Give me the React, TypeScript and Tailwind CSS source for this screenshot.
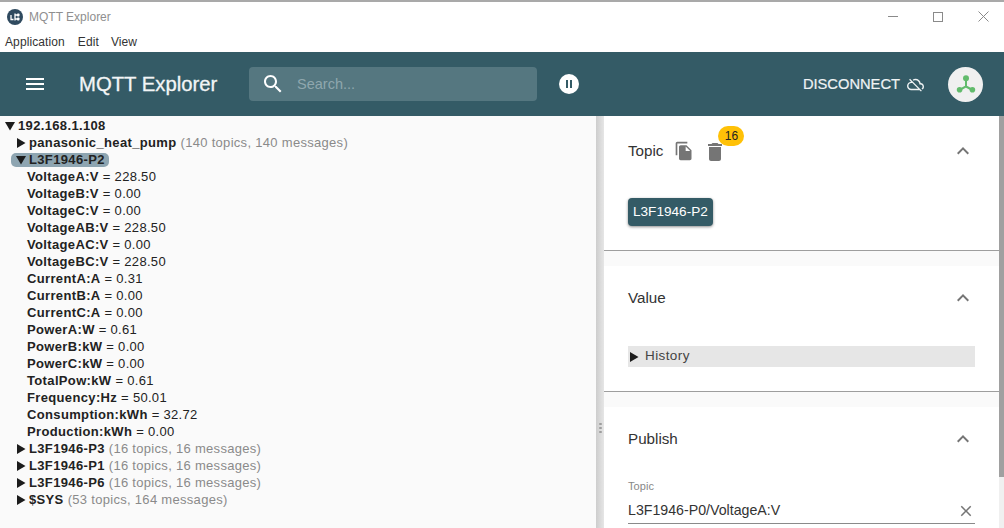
import React from "react";

const sans = "font-['Liberation_Sans',sans-serif]";

function Collapsed({ name, info }: { name: string; info: string }) {
  return (
    <div className="flex h-[17px] items-center pl-[16px]">
      <svg width="10" height="10" viewBox="0 0 10 10" className="mr-[3px] shrink-0"><path d="M1 0 L9.5 5 L1 10 Z" fill="#1c1c1c" /></svg>
      <span className="font-bold text-[#222]">{name}</span>
      <span className="ml-[4px] tracking-[0.3px] text-[#8a8a8a]">{info}</span>
    </div>
  );
}

function Leaf({ k, v }: { k: string; v: string }) {
  return (
    <div className="flex h-[17px] items-center whitespace-pre pl-[27px] text-[#222]">
      <span className="font-bold">{k}</span>
      <span className="tracking-[0.3px]"> = {v}</span>
    </div>
  );
}

const leaves: [string, string][] = [
  ["VoltageA:V", "228.50"],
  ["VoltageB:V", "0.00"],
  ["VoltageC:V", "0.00"],
  ["VoltageAB:V", "228.50"],
  ["VoltageAC:V", "0.00"],
  ["VoltageBC:V", "228.50"],
  ["CurrentA:A", "0.31"],
  ["CurrentB:A", "0.00"],
  ["CurrentC:A", "0.00"],
  ["PowerA:W", "0.61"],
  ["PowerB:kW", "0.00"],
  ["PowerC:kW", "0.00"],
  ["TotalPow:kW", "0.61"],
  ["Frequency:Hz", "50.01"],
  ["Consumption:kWh", "32.72"],
  ["Production:kWh", "0.00"],
];

function Chevron() {
  return (
    <svg width="24" height="24" viewBox="0 0 24 24" fill="#757575" className="shrink-0">
      <path d="M12 8l-6 6 1.41 1.41L12 10.83l4.59 4.58L18 14z" />
    </svg>
  );
}

function Divider() {
  return <div className="h-[16px] border-t border-[#9e9e9e] bg-[#fafafa]" />;
}

export default function App() {
  return (
    <div className={`flex h-[528px] w-[1004px] flex-col overflow-hidden bg-white ${sans}`}>
      <div className="flex h-[31px] shrink-0 items-center border-t-2 border-[#a9a9a9] bg-white pl-[7px]">
        <svg width="16" height="16" viewBox="0 0 16 16" className="shrink-0">
          <circle cx="8" cy="8" r="8" fill="#2f4a5f" />
          <path d="M4 6v4.5h2.5M8 4.5v7M8 6h2.5M8 10h2.5" stroke="#fff" strokeWidth="1.3" fill="none" />
          <rect x="10" y="4.5" width="2.5" height="3" rx="0.8" fill="#fff" />
          <rect x="10" y="8.5" width="2.5" height="3" rx="0.8" fill="#fff" />
        </svg>
        <span className="ml-[6px] text-[12px] text-[#8f8f8f]">MQTT Explorer</span>
        <div className="ml-auto flex items-center">
          <div className="mr-[35px] h-px w-[10px] bg-[#8a8a8a]" />
          <div className="mr-[35px] h-[10px] w-[10px] border border-[#8a8a8a]" />
          <svg width="11" height="11" viewBox="0 0 11 11" className="mr-[15px]"><path d="M0.5 0.5l10 10M10.5 0.5l-10 10" stroke="#8a8a8a" strokeWidth="1" /></svg>
        </div>
      </div>
      <div className="flex h-[21px] shrink-0 items-center bg-white pl-[5px] pt-[1px] text-[12px] tracking-[0.1px] text-[#333]">
        <span>Application</span>
        <span className="ml-[13px]">Edit</span>
        <span className="ml-[12px]">View</span>
      </div>
      <header className="flex h-[64px] shrink-0 items-center bg-[#345b66] text-white">
        <svg width="24" height="24" viewBox="0 0 24 24" fill="#fff" className="ml-[23px] shrink-0"><path d="M3 18h18v-2H3v2zm0-5h18v-2H3v2zm0-7v2h18V6H3z" /></svg>
        <span className="ml-[32px] w-[138px] whitespace-nowrap text-[20.3px] text-[#f2f5f6] [-webkit-text-stroke:0.3px_#f2f5f6]">MQTT Explorer</span>
        <div className="ml-[32px] flex h-[34px] w-[288px] items-center rounded bg-[#557780]">
          <svg width="24" height="24" viewBox="0 0 24 24" fill="#fff" className="ml-[12px] shrink-0"><path d="M15.5 14h-.79l-.28-.27C15.41 12.59 16 11.11 16 9.5 16 5.91 13.09 3 9.5 3S3 5.91 3 9.5 5.91 16 9.5 16c1.61 0 3.09-.59 4.23-1.57l.27.28v.79l5 4.99L20.49 19l-4.99-5zm-6 0C7.01 14 5 11.99 5 9.5S7.01 5 9.5 5 14 7.01 14 9.5 11.99 14 9.5 14z" /></svg>
          <span className="ml-[12px] pt-[1px] text-[14.5px] text-[#8fa7ae]">Search...</span>
        </div>
        <div className="ml-[22px] flex h-[20px] w-[20px] items-center justify-center gap-[2px] rounded-full bg-white">
          <div className="h-[8px] w-[2px] bg-[#345b66]" />
          <div className="h-[8px] w-[2px] bg-[#345b66]" />
        </div>
        <span className="ml-auto text-[14.7px] text-[#eef3f4] [-webkit-text-stroke:0.2px_#eef3f4]">DISCONNECT</span>
        <svg width="17" height="17" viewBox="0 0 24 24" fill="#eef3f4" className="ml-[7px] shrink-0"><path d="M19.35 10.04C18.67 6.59 15.64 4 12 4c-1.48 0-2.85.43-4.01 1.17l1.46 1.46C10.21 6.23 11.08 6 12 6c3.04 0 5.5 2.46 5.5 5.5v.5H19c1.66 0 3 1.34 3 3 0 1.13-.64 2.11-1.56 2.62l1.45 1.45C23.16 18.16 24 16.68 24 15c0-2.64-2.05-4.78-4.65-4.96zM3 5.27l2.75 2.74C2.56 8.15 0 10.77 0 14c0 3.31 2.69 6 6 6h11.73l2 2L21 20.73 4.27 4 3 5.27zM7.73 10l8 8H6c-2.21 0-4-1.79-4-4s1.79-4 4-4h1.73z" /></svg>
        <div className="ml-[24px] mr-[21px] flex h-[35px] w-[35px] items-center justify-center rounded-full bg-[#f0f0f0]">
          <svg width="20" height="20" viewBox="0 0 20 20">
            <path d="M10 4v8.5L3.5 16M10 12.5l6.5 3.5" stroke="#62bb6c" strokeWidth="2" fill="none" />
            <circle cx="10" cy="4.2" r="3" fill="#62bb6c" />
            <circle cx="3.6" cy="15.8" r="2.8" fill="#62bb6c" />
            <circle cx="16.4" cy="15.8" r="2.8" fill="#62bb6c" />
          </svg>
        </div>
      </header>
      <div className="flex min-h-0 flex-1">
        <div className="w-[596px] shrink-0 bg-[#fafafa] pl-[5px] pt-[1px] text-[13px] tracking-[0.35px]">
          <div className="flex h-[17px] items-center">
            <svg width="10" height="10" viewBox="0 0 10 10" className="mr-[3px] shrink-0"><path d="M0 1 L10 1 L5 9.5 Z" fill="#1c1c1c" /></svg>
            <span className="font-bold text-[#222]">192.168.1.108</span>
          </div>
          <div className="-ml-[5px]">
            <Collapsed name="panasonic_heat_pump" info="(140 topics, 140 messages)" />
          </div>
          <div className="ml-[6px] flex h-[14px] mt-[1.5px] mb-[1.5px] w-[98px] items-center rounded-[5px] bg-[#8ea5b1] pl-[5px]">
            <svg width="10" height="10" viewBox="0 0 10 10" className="mr-[3px] shrink-0"><path d="M0 1 L10 1 L5 9.5 Z" fill="#1c1c1c" /></svg>
            <span className="font-bold text-[#222]">L3F1946-P2</span>
          </div>
          <div className="-ml-[5px]">
            {leaves.map(([k, v]) => (
              <Leaf key={k} k={k} v={v} />
            ))}
            <Collapsed name="L3F1946-P3" info="(16 topics, 16 messages)" />
            <Collapsed name="L3F1946-P1" info="(16 topics, 16 messages)" />
            <Collapsed name="L3F1946-P6" info="(16 topics, 16 messages)" />
            <Collapsed name="$SYS" info="(53 topics, 164 messages)" />
          </div>
        </div>
        <div className="flex w-[8px] shrink-0 items-center justify-center bg-gradient-to-r from-[#cdcdcd] to-[#e6e6e6]">
          <div className="mt-[212px] flex flex-col gap-[1.5px]">
            <div className="h-[2.5px] w-[3px] rounded-full bg-[#9e9e9e]" />
            <div className="h-[2.5px] w-[3px] rounded-full bg-[#9e9e9e]" />
            <div className="h-[2.5px] w-[3px] rounded-full bg-[#9e9e9e]" />
          </div>
        </div>
        <div className="flex w-[395px] shrink-0 flex-col bg-white">
          <section className="h-[134px] shrink-0 px-[24px] pt-[21px]">
            <div className="flex h-[28px] items-center">
              <span className="text-[15.2px] text-[#333]">Topic</span>
              <svg width="20" height="20" viewBox="0 0 24 24" fill="#757575" className="ml-[11px]"><path d="M16 1H4c-1.1 0-2 .9-2 2v14h2V3h12V1zm-1 4l6 6v10c0 1.1-.9 2-2 2H7.99C6.89 23 6 22.1 6 21l.01-14c0-1.1.89-2 1.99-2h7zm-1 7h5.5L14 6.5V12z" /></svg>
              <div className="relative ml-[9px] mt-[2px] h-[24px]">
                <svg width="24" height="24" viewBox="0 0 24 24" fill="#757575"><path d="M6 19c0 1.1.9 2 2 2h8c1.1 0 2-.9 2-2V7H6v12zM19 4h-3.5l-1-1h-5l-1 1H5v2h14V4z" /></svg>
                <span className="absolute left-[15px] top-[-14px] flex h-[20px] w-[26px] items-center justify-center rounded-full bg-[#ffc107] text-[12px] text-[#222]">16</span>
              </div>
              <div className="ml-auto"><Chevron /></div>
            </div>
            <div className="mt-[33px] inline-flex h-[28px] items-center rounded-[4px] bg-[#345b66] px-[5px] text-[13.6px] text-white shadow-[0_1px_3px_rgba(0,0,0,0.45)]">L3F1946-P2</div>
          </section>
          <Divider />
          <section className="h-[125px] shrink-0 px-[24px] pt-[18px]">
            <div className="flex h-[28px] items-center">
              <span className="text-[15.2px] text-[#333]">Value</span>
              <div className="ml-auto"><Chevron /></div>
            </div>
            <div className="mt-[34px] flex h-[21px] items-center bg-[#e6e6e6]">
              <svg width="10" height="10" viewBox="0 0 10 10" className="ml-[1px]"><path d="M1 0 L9.5 5 L1 10 Z" fill="#1c1c1c" /></svg>
              <span className="ml-[6px] text-[13.5px] tracking-[0.4px] text-[#444]">History</span>
            </div>
          </section>
          <Divider />
          <section className="flex-1 px-[24px] pt-[18px]">
            <div className="flex h-[28px] items-center">
              <span className="text-[15.2px] text-[#333]">Publish</span>
              <div className="ml-auto"><Chevron /></div>
            </div>
            <div className="mt-[25px] text-[11px] tracking-[0.1px] text-[#888]">Topic</div>
            <div className="mt-[4px] flex h-[25px] items-center border-b border-[#8a8a8a] text-[14.2px] text-[#333]">
              <span>L3F1946-P0/VoltageA:V</span>
              <svg width="18" height="18" viewBox="0 0 24 24" fill="#757575" className="ml-auto"><path d="M19 6.41L17.59 5 12 10.59 6.41 5 5 6.41 10.59 12 5 17.59 6.41 19 12 13.41 17.59 19 19 17.59 13.41 12z" /></svg>
            </div>
          </section>
        </div>
        <div className="flex w-[5px] shrink-0 flex-col bg-[#f0f0f0]">
          <div className="h-[361px] bg-[#a0a0a0]" />
        </div>
      </div>
    </div>
  );
}
